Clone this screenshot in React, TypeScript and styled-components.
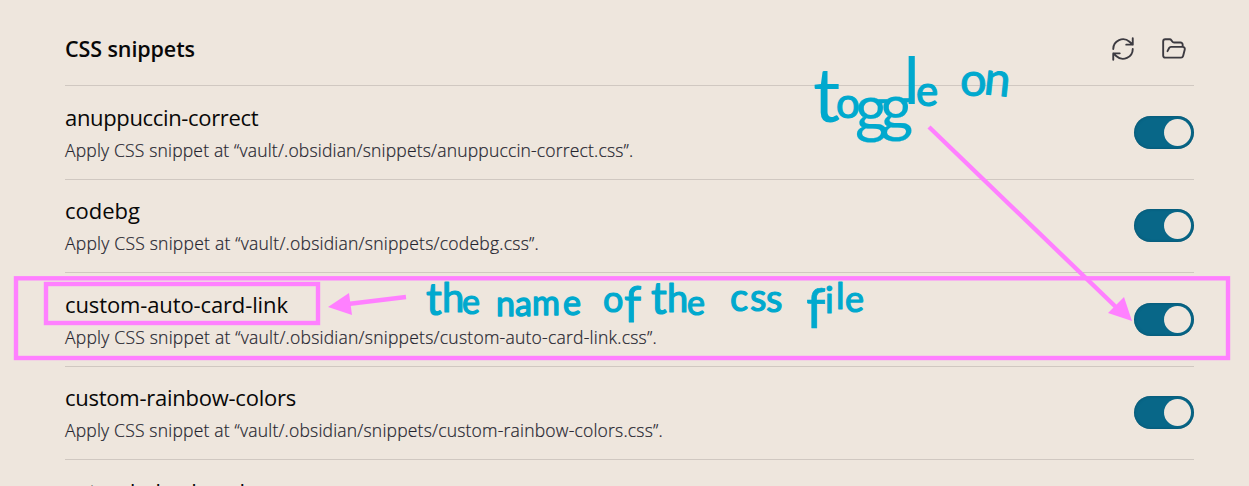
import React from "react";
import styled, { createGlobalStyle } from "styled-components";
import { FolderOpen } from "lucide-react";

const Global = createGlobalStyle`
  *{box-sizing:border-box}
  html,body{margin:0;background:#eee6dd;overflow:hidden}
`;
const Page = styled.main`
  position:relative;width:1249px;height:486px;overflow:hidden;padding:13px 55px 0 65px;
  background:#eee6dd;color:#080808;font-family:"Open Sans","Noto Sans",sans-serif;
`;
const Header = styled.header`
  height:72px;display:flex;align-items:center;justify-content:space-between;padding-right:7px;
`;
const Heading = styled.h2`
  margin:0;font-size:21.5px;font-weight:600;letter-spacing:-.1px;line-height:30px;
`;
const Actions = styled.div`display:flex;gap:25px;color:#3c3a40;`;
const Row = styled.section`
  height:93.5px;border-top:1px solid #d0c8c1;display:flex;justify-content:space-between;
  padding-top:16.9px;
`;
const Name = styled.div<{ $gap: number }>`
  font-size:22px;font-weight:400;line-height:29px;letter-spacing:${p => p.$gap}px;white-space:nowrap;
`;
const Description = styled.div<{ $gap: number }>`
  margin-top:5px;font-size:17.5px;line-height:26px;font-weight:300;color:#24242e;
  -webkit-text-stroke:.2px #24242e;letter-spacing:${p => p.$gap}px;white-space:nowrap;
`;
const Switch = styled.button`
  width:60px;height:33px;margin-top:13px;border:0;border-radius:17px;background:#086788;
  box-shadow:inset 0 0 3px #07506c;padding:3px;display:flex;justify-content:flex-end;
`;
const Knob = styled.span`width:27px;height:27px;border-radius:50%;background:#eee6dd;`;
const List = styled.div`width:1129px;`;
const Annotations = styled.svg`position:absolute;left:0;top:0;pointer-events:none;`;
const Ink = styled.text`
  fill:#00a9ce;stroke:#00a9ce;stroke-linejoin:round;font-family:Lato,"Open Sans",sans-serif;
`;

const Refresh = () => (
  <svg width="26" height="26" viewBox="0 0 24 24" fill="none" stroke="currentColor" strokeWidth="1.75" strokeLinecap="round" strokeLinejoin="round">
    <path d="M21 2v6h-6M3 12a9 9 0 0 1 15-6.7L21 8M3 22v-6h6M21 12a9 9 0 0 1-15 6.7L3 16" />
  </svg>
);

const snippets = [
  { name: "anuppuccin-correct", nameGap: -.34, gap: .18 },
  { name: "codebg", nameGap: 0, gap: .235 },
  { name: "custom-auto-card-link", nameGap: -.12, gap: .235 },
  { name: "custom-rainbow-colors", nameGap: -.25, gap: .2 },
  { name: "extended-colorschemes", nameGap: -.12, gap: .2 },
];

export default function App() {
  return <><Global /><Page>
    <List>
      <Header><Heading>CSS snippets</Heading><Actions><Refresh /><FolderOpen size={26} strokeWidth={1.75}/></Actions></Header>
      {snippets.map(s => <Row key={s.name}>
        <div><Name $gap={s.nameGap}>{s.name}</Name><Description $gap={s.gap}>Apply CSS snippet at “vault/.obsidian/snippets/{s.name}.css”.</Description></div>
        <Switch aria-label={s.name}><Knob /></Switch>
      </Row>)}
    </List>
    <Annotations width="1249" height="486">
      <g fill="none" stroke="#ff80ff" strokeWidth="4.4">
        <rect x="16" y="278.3" width="1212" height="79.7"/>
        <rect x="46" y="284" width="272" height="39"/>
        <path d="M406 297 L348 304M929 127 L1118 309"/>
      </g>
      <path fill="#ff80ff" d="M328 307L349 293L352 315ZM1132 321L1124 297L1108 313Z"/>
      <Ink fontSize="42" strokeWidth="1.2" x="813 836 855 880 904 916" y="122 118 131 130 104 106"><tspan fontSize="76" strokeWidth="0">t</tspan>o<tspan fontSize="64" strokeWidth=".2">gg</tspan><tspan fontSize="66" strokeWidth=".2">l</tspan>e</Ink>
      <Ink fontSize="47" strokeWidth="1" x="960 983" y="96 94" rotate="0 6">on</Ink>
      <Ink fontSize="34" strokeWidth="1.2" x="426 442 462" y="315 312 314"><tspan fontSize="44">t</tspan><tspan fontSize="40">h</tspan>e</Ink>
      <Ink fontSize="34" strokeWidth="1.4" x="496 515 532 563" y="316 316 315 315">name</Ink>
      <Ink fontSize="36" strokeWidth="1.2" x="603 624" y="312 322">o<tspan fontSize="50" strokeWidth=".8">f</tspan></Ink>
      <Ink fontSize="34" strokeWidth="1.2" x="651 667 687" y="314 312 315"><tspan fontSize="44">t</tspan><tspan fontSize="38">h</tspan>e</Ink>
      <Ink fontSize="38" strokeWidth="1.2" x="730 750 766" y="311 311 312">css</Ink>
      <Ink fontSize="36" strokeWidth="1.2" x="806 825 836 845" y="328 313 309 312"><tspan fontSize="56" strokeWidth=".6">f</tspan>ile</Ink>
    </Annotations>
  </Page></>;
}
